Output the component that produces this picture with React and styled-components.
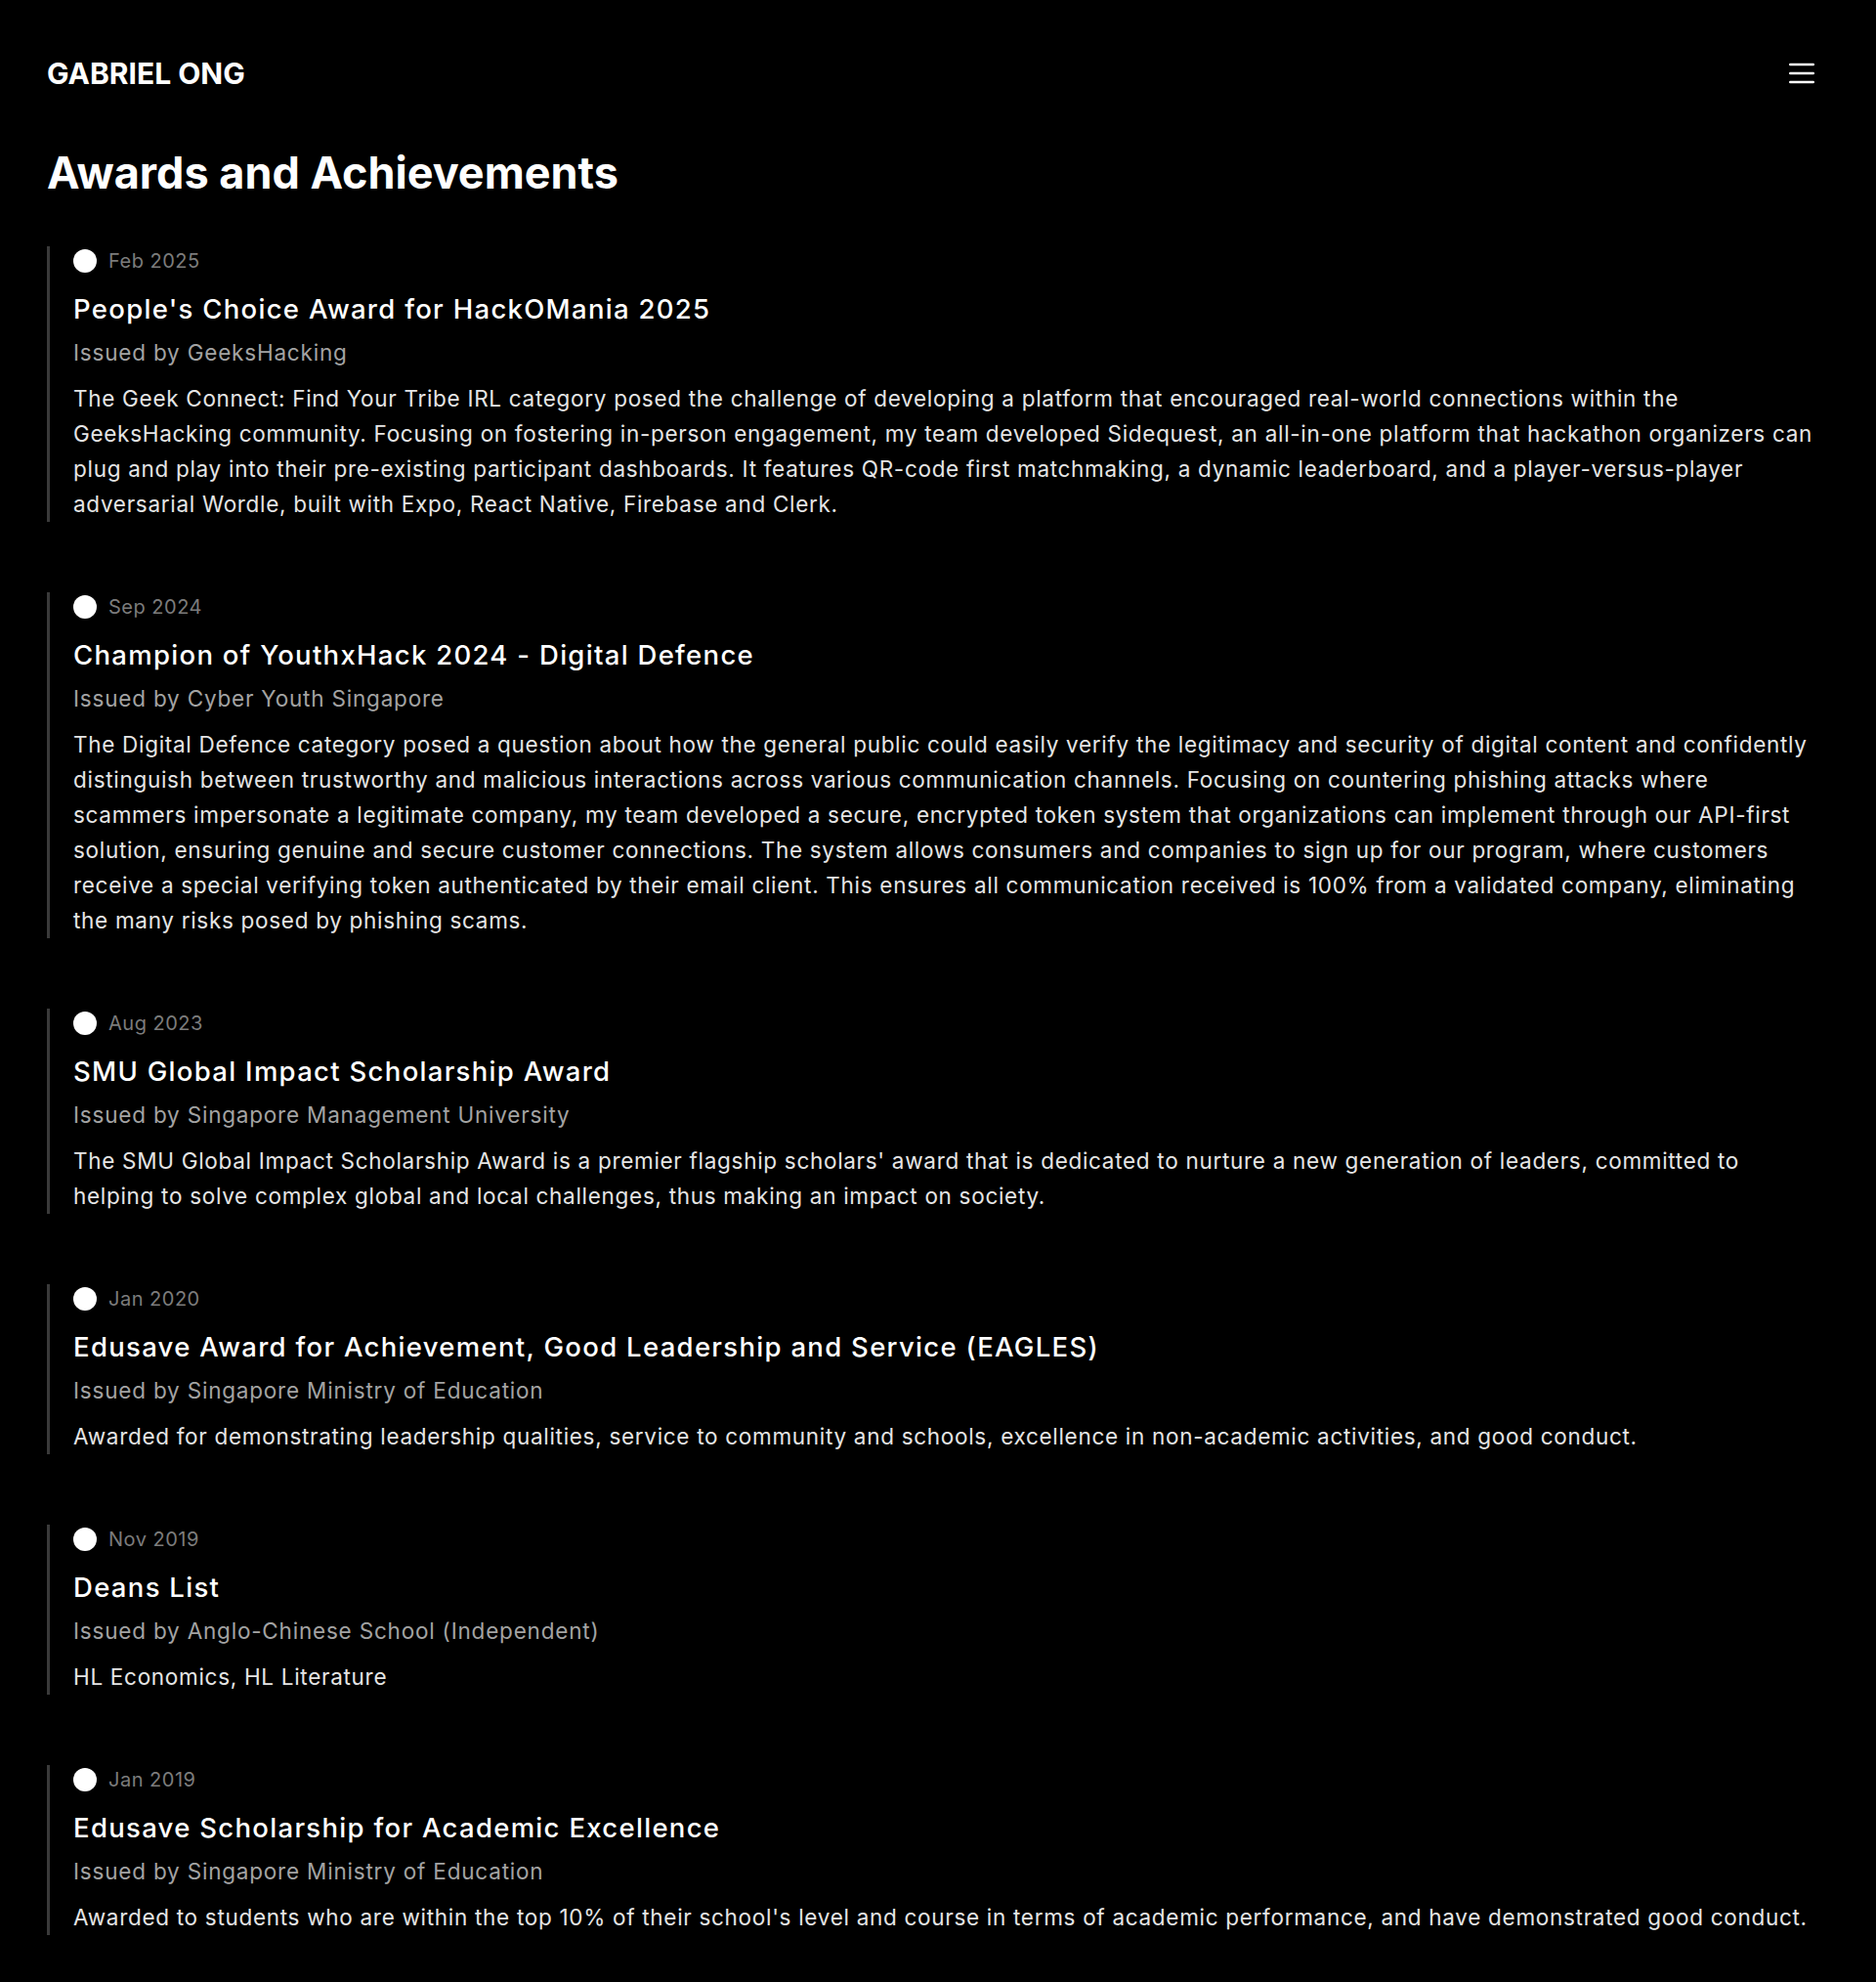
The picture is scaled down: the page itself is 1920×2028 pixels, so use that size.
import React from "react";
import styled, { createGlobalStyle } from "styled-components";

const GlobalStyle = createGlobalStyle`
  body {
    margin: 0;
    background: #000;
    color: #fff;
    font-family: Inter, "Noto Sans", sans-serif;
    -webkit-font-smoothing: antialiased;
  }
`;

const Page = styled.div`
  padding: 0 48px 48px;
  min-height: 100vh;
  box-sizing: border-box;
  background: #000;
`;

const Header = styled.header`
  height: 150px;
  display: flex;
  align-items: center;
  justify-content: space-between;
`;

const Brand = styled.div`
  font-size: 30px;
  font-weight: 700;
  color: #fff;
`;

const MenuButton = styled.button`
  background: none;
  border: none;
  padding: 0;
  margin-right: 15px;
  display: flex;
  color: #fff;
  cursor: pointer;
`;

const Title = styled.h1`
  margin: 0;
  font-size: 45px;
  line-height: 54px;
  font-weight: 700;
  color: #fff;
`;

const Timeline = styled.div`
  margin-top: 48px;
  display: flex;
  flex-direction: column;
  gap: 72px;
`;

const Item = styled.article`
  border-left: 3px solid #3a3a3a;
  padding: 0 6px 0 24px;
  display: flex;
  flex-direction: column;
`;

const DateRow = styled.div`
  height: 30px;
  display: flex;
  align-items: center;
  gap: 12px;
`;

const Dot = styled.span`
  width: 24px;
  height: 24px;
  border-radius: 50%;
  background: #fff;
  flex-shrink: 0;
`;

const DateText = styled.span`
  font-size: 20px;
  line-height: 30px;
  letter-spacing: 0.5px;
  color: #7c7c7c;
`;

const Heading = styled.h2`
  margin: 17px 0 0;
  font-size: 27.5px;
  line-height: 35px;
  font-weight: 500;
  letter-spacing: 1.3px;
  color: #fff;
`;

const Issuer = styled.div`
  margin-top: 9px;
  font-size: 22.5px;
  line-height: 35px;
  letter-spacing: 0.8px;
  color: #a3a3a3;
`;

const Description = styled.p`
  margin: 12px 0 0;
  font-size: 22.5px;
  line-height: 36px;
  letter-spacing: 0.7px;
  color: #e5e5e5;
`;

const MenuIcon = () => (
  <svg width="26" height="22" viewBox="0 0 26 22" fill="none" stroke="currentColor" strokeWidth="2.6" strokeLinecap="round">
    <line x1="1.3" y1="2" x2="24.7" y2="2" />
    <line x1="1.3" y1="11" x2="24.7" y2="11" />
    <line x1="1.3" y1="20" x2="24.7" y2="20" />
  </svg>
);

const awards = [
  {
    date: "Feb 2025",
    title: "People's Choice Award for HackOMania 2025",
    issuer: "GeeksHacking",
    text: "The Geek Connect: Find Your Tribe IRL category posed the challenge of developing a platform that encouraged real-world connections within the GeeksHacking community. Focusing on fostering in-person engagement, my team developed Sidequest, an all-in-one platform that hackathon organizers can plug and play into their pre-existing participant dashboards. It features QR-code first matchmaking, a dynamic leaderboard, and a player-versus-player adversarial Wordle, built with Expo, React Native, Firebase and Clerk.",
  },
  {
    date: "Sep 2024",
    title: "Champion of YouthxHack 2024 - Digital Defence",
    issuer: "Cyber Youth Singapore",
    text: "The Digital Defence category posed a question about how the general public could easily verify the legitimacy and security of digital content and confidently distinguish between trustworthy and malicious interactions across various communication channels. Focusing on countering phishing attacks where scammers impersonate a legitimate company, my team developed a secure, encrypted token system that organizations can implement through our API-first solution, ensuring genuine and secure customer connections. The system allows consumers and companies to sign up for our program, where customers receive a special verifying token authenticated by their email client. This ensures all communication received is 100% from a validated company, eliminating the many risks posed by phishing scams.",
  },
  {
    date: "Aug 2023",
    title: "SMU Global Impact Scholarship Award",
    issuer: "Singapore Management University",
    text: "The SMU Global Impact Scholarship Award is a premier flagship scholars' award that is dedicated to nurture a new generation of leaders, committed to helping to solve complex global and local challenges, thus making an impact on society.",
  },
  {
    date: "Jan 2020",
    title: "Edusave Award for Achievement, Good Leadership and Service (EAGLES)",
    issuer: "Singapore Ministry of Education",
    text: "Awarded for demonstrating leadership qualities, service to community and schools, excellence in non-academic activities, and good conduct.",
  },
  {
    date: "Nov 2019",
    title: "Deans List",
    issuer: "Anglo-Chinese School (Independent)",
    text: "HL Economics, HL Literature",
  },
  {
    date: "Jan 2019",
    title: "Edusave Scholarship for Academic Excellence",
    issuer: "Singapore Ministry of Education",
    text: "Awarded to students who are within the top 10% of their school's level and course in terms of academic performance, and have demonstrated good conduct.",
  },
];

export default function App() {
  return (
    <Page>
      <GlobalStyle />
      <Header>
        <Brand>GABRIEL ONG</Brand>
        <MenuButton aria-label="Menu">
          <MenuIcon />
        </MenuButton>
      </Header>
      <Title>Awards and Achievements</Title>
      <Timeline>
        {awards.map((a) => (
          <Item key={a.title}>
            <DateRow>
              <Dot />
              <DateText>{a.date}</DateText>
            </DateRow>
            <Heading>{a.title}</Heading>
            <Issuer>Issued by {a.issuer}</Issuer>
            <Description>{a.text}</Description>
          </Item>
        ))}
      </Timeline>
    </Page>
  );
}
